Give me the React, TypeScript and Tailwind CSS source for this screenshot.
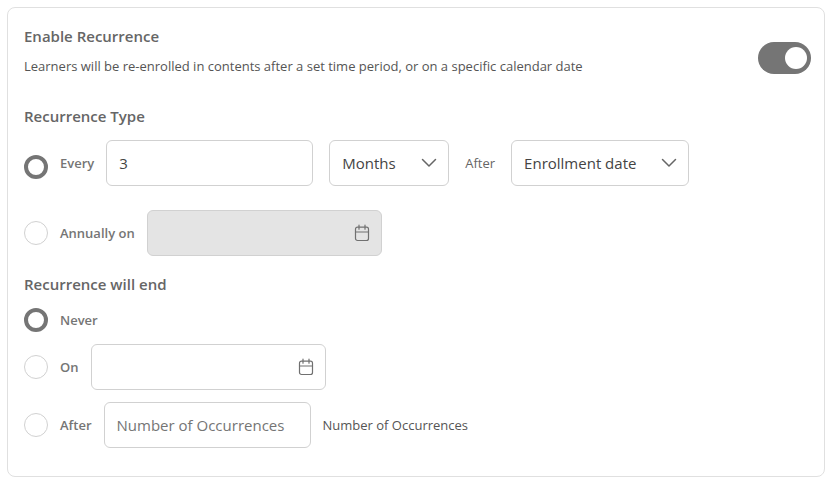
import { useState } from "react";
import type { InputHTMLAttributes, ReactNode } from "react";

const fieldClass =
  "h-[46px] rounded-md border border-[#d1d1d1] bg-white px-3 text-[15px] leading-6 text-[#444] placeholder:text-[#757575] outline-none focus-visible:border-[#707070]";

function Radio(props: InputHTMLAttributes<HTMLInputElement>) {
  return (
    <input
      type="radio"
      className="size-6 shrink-0 appearance-none rounded-full border border-[#d1d1d1] bg-white checked:border-4 checked:border-[#757575]"
      {...props}
    />
  );
}

function OptionLabel({ htmlFor, children }: { htmlFor: string; children: ReactNode }) {
  return (
    <label htmlFor={htmlFor} className="shrink-0 text-[13px] leading-5 font-semibold text-[#757575]">
      {children}
    </label>
  );
}

function Heading({ children }: { children: ReactNode }) {
  return <h2 className="text-[15px] leading-6 font-semibold text-[#666]">{children}</h2>;
}

function CalendarIcon() {
  return (
    <svg viewBox="0 0 16 18" className="h-[18px] w-4" fill="none" stroke="#707070" strokeWidth="1.2" strokeLinecap="round" aria-hidden="true">
      <rect x="1.5" y="3.200" width="13" height="13.300" rx="2" />
      <path d="M1.500 8h13M5 1.200v4M11 1.200v4" />
    </svg>
  );
}

function DateField({ label, disabled }: { label: string; disabled?: boolean }) {
  return (
    <div
      className={`flex h-[46px] w-[235px] items-center rounded-md border border-[#d1d1d1] pr-[11px] ${
        disabled ? "bg-[#e4e4e4]" : "bg-white"
      }`}
    >
      <input type="text" aria-label={label} disabled={disabled} className="h-full min-w-0 flex-1 bg-transparent px-3 text-[15px] text-[#444] outline-none" />
      <button type="button" aria-label={`${label}: open calendar`} disabled={disabled}>
        <CalendarIcon />
      </button>
    </div>
  );
}

function SelectField({ label, options, width }: { label: string; options: string[]; width: string }) {
  return (
    <div className={`relative ${width}`}>
      <select aria-label={label} className={`${fieldClass} w-full appearance-none`}>
        {options.map((option) => (
          <option key={option}>{option}</option>
        ))}
      </select>
      <svg
        viewBox="0 0 16 16"
        className="pointer-events-none absolute inset-y-0 right-3 my-auto size-4"
        fill="none"
        stroke="#666"
        strokeWidth="1.5"
        strokeLinecap="round"
        strokeLinejoin="round"
        aria-hidden="true"
      >
        <path d="M1.500 4.500L8 11l6.500-6.500" />
      </svg>
    </div>
  );
}

export default function App() {
  const [enabled, setEnabled] = useState(true);
  const [type, setType] = useState("every");
  const [end, setEnd] = useState("never");

  return (
    <main className="p-[7px] font-['Open_Sans','Noto_Sans',sans-serif]">
      <section className="rounded-lg border border-[#e0e0e0] bg-white pt-4 pr-[13px] pb-7 pl-4">
        <header className="flex items-end justify-between">
          <div>
            <Heading>Enable Recurrence</Heading>
            <p className="mt-2 text-[13px] leading-5 text-[#555]">
              Learners will be re-enrolled in contents after a set time period, or on a specific calendar date
            </p>
          </div>
          <div className="shrink-0 pb-0.5">
            <button
              type="button"
              role="switch"
              aria-checked={enabled}
              aria-label="Enable Recurrence"
              onClick={() => setEnabled(!enabled)}
              className={`flex h-8 w-[53px] items-center rounded-full px-1 ${
                enabled ? "justify-end bg-[#757575]" : "justify-start bg-[#c4c4c4]"
              }`}
            >
              <span className="size-[22px] rounded-full bg-white" />
            </button>
          </div>
        </header>

        <div className="mt-7">
          <Heading>Recurrence Type</Heading>
          <div className="mt-3 flex items-center gap-3">
            <Radio id="every" name="type" checked={type === "every"} onChange={() => setType("every")} />
            <div className="flex items-center gap-4 pb-2">
              <div className="flex items-center gap-3">
                <OptionLabel htmlFor="every">Every</OptionLabel>
                <input type="text" aria-label="Interval" defaultValue="3" className={`${fieldClass} w-[207px]`} />
              </div>
              <SelectField label="Interval unit" options={["Months", "Days", "Years"]} width="w-[120px]" />
              <span className="text-[13px] leading-5 text-[#666]">After</span>
              <SelectField label="Start point" options={["Enrollment date", "Completion date"]} width="w-[178px]" />
            </div>
          </div>
          <div className="mt-4 flex items-center gap-3">
            <Radio id="annually" name="type" checked={type === "annually"} onChange={() => setType("annually")} />
            <OptionLabel htmlFor="annually">Annually on</OptionLabel>
            <DateField label="Annual date" disabled={type !== "annually"} />
          </div>
        </div>

        <div className="mt-4">
          <Heading>Recurrence will end</Heading>
          <div className="mt-3 flex flex-col gap-3">
            <div className="flex items-center gap-3">
              <Radio id="never" name="end" checked={end === "never"} onChange={() => setEnd("never")} />
              <OptionLabel htmlFor="never">Never</OptionLabel>
            </div>
            <div className="flex items-center gap-3">
              <Radio id="on" name="end" checked={end === "on"} onChange={() => setEnd("on")} />
              <OptionLabel htmlFor="on">On</OptionLabel>
              <DateField label="End date" />
            </div>
            <div className="flex items-center gap-3">
              <Radio id="after" name="end" checked={end === "after"} onChange={() => setEnd("after")} />
              <OptionLabel htmlFor="after">After</OptionLabel>
              <input id="occurrences" type="text" placeholder="Number of Occurrences" className={`${fieldClass} w-[207px]`} />
              <label htmlFor="occurrences" className="text-[13px] leading-5 text-[#555]">
                Number of Occurrences
              </label>
            </div>
          </div>
        </div>
      </section>
    </main>
  );
}
